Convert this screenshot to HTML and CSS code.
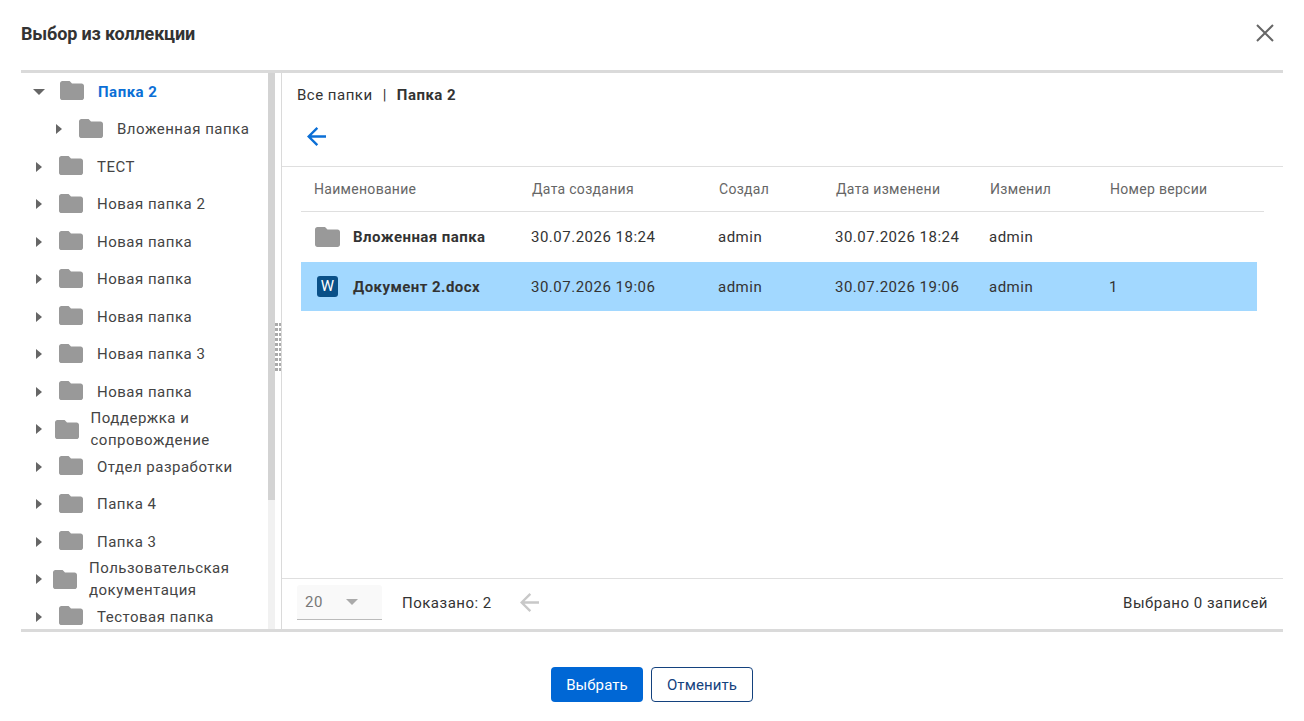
FILE: index.html
```html
<!DOCTYPE html>
<html lang="ru">

<head>
    <meta charset="UTF-8">
    <title>Выбор из коллекции</title>
    <link rel="stylesheet" href="styles.css">
</head>

<body>
    <svg class="sprite" width="0" height="0">
        <symbol id="folder" viewBox="2 4 20 16">
            <path d="M10 4H4c-1.1 0-2 .9-2 2v12c0 1.1.9 2 2 2h16c1.1 0 2-.9 2-2V8c0-1.1-.9-2-2-2h-8l-2-2z" />
        </symbol>
        <symbol id="arrow-left" viewBox="4 4 16 16">
            <path d="M20 11H7.83l5.59-5.59L12 4l-8 8 8 8 1.41-1.41L7.83 13H20v-2z" />
        </symbol>
    </svg>

    <header class="header">
        <h1 class="title">Выбор из коллекции</h1>
        <svg class="close" viewBox="0 0 18 18">
            <path d="M1 1l16 16M17 1L1 17" />
        </svg>
    </header>

    <main class="panel">
        <!-- дерево папок -->
        <nav class="tree">
            <div class="tree-row tree-row--active">
                <span class="caret caret--open"></span>
                <svg class="folder"><use href="#folder" /></svg>
                <span class="tree-label">Папка 2</span>
            </div>
            <div class="tree-row tree-row--nested">
                <span class="caret"></span>
                <svg class="folder"><use href="#folder" /></svg>
                <span class="tree-label">Вложенная папка</span>
            </div>
            <div class="tree-row"><span class="caret"></span><svg class="folder"><use href="#folder" /></svg><span class="tree-label">ТЕСТ</span></div>
            <div class="tree-row"><span class="caret"></span><svg class="folder"><use href="#folder" /></svg><span class="tree-label">Новая папка 2</span></div>
            <div class="tree-row"><span class="caret"></span><svg class="folder"><use href="#folder" /></svg><span class="tree-label">Новая папка</span></div>
            <div class="tree-row"><span class="caret"></span><svg class="folder"><use href="#folder" /></svg><span class="tree-label">Новая папка</span></div>
            <div class="tree-row"><span class="caret"></span><svg class="folder"><use href="#folder" /></svg><span class="tree-label">Новая папка</span></div>
            <div class="tree-row"><span class="caret"></span><svg class="folder"><use href="#folder" /></svg><span class="tree-label">Новая папка 3</span></div>
            <div class="tree-row"><span class="caret"></span><svg class="folder"><use href="#folder" /></svg><span class="tree-label">Новая папка</span></div>
            <div class="tree-row tree-row--wrap"><span class="caret"></span><svg class="folder"><use href="#folder" /></svg><span class="tree-label">Поддержка и сопровождение</span></div>
            <div class="tree-row"><span class="caret"></span><svg class="folder"><use href="#folder" /></svg><span class="tree-label">Отдел разработки</span></div>
            <div class="tree-row"><span class="caret"></span><svg class="folder"><use href="#folder" /></svg><span class="tree-label">Папка 4</span></div>
            <div class="tree-row"><span class="caret"></span><svg class="folder"><use href="#folder" /></svg><span class="tree-label">Папка 3</span></div>
            <div class="tree-row tree-row--wrap2"><span class="caret"></span><svg class="folder"><use href="#folder" /></svg><span class="tree-label">Пользовательская документация</span></div>
            <div class="tree-row"><span class="caret"></span><svg class="folder"><use href="#folder" /></svg><span class="tree-label">Тестовая папка</span></div>
        </nav>
        <div class="scrollbar"><div class="scrollbar-thumb"></div></div>
        <div class="splitter"><div class="splitter-grip"></div></div>

        <!-- содержимое папки -->
        <section class="content">
            <div class="crumbs">
                <span>Все папки</span>
                <span class="crumbs-sep">|</span>
                <b class="crumbs-current">Папка 2</b>
            </div>
            <div class="back">
                <svg class="back-icon"><use href="#arrow-left" /></svg>
            </div>

            <div class="table">
                <div class="table-head">
                    <span>Наименование</span>
                    <span>Дата создания</span>
                    <span>Создал</span>
                    <span>Дата изменени</span>
                    <span>Изменил</span>
                    <span>Номер версии</span>
                </div>
                <div class="table-row">
                    <span class="name"><svg class="folder folder--table"><use href="#folder" /></svg><b>Вложенная папка</b></span>
                    <span>30.07.2026 18:24</span>
                    <span>admin</span>
                    <span>30.07.2026 18:24</span>
                    <span>admin</span>
                    <span></span>
                </div>
                <div class="table-row table-row--selected">
                    <span class="name"><span class="word-icon">W</span><b>Документ 2.docx</b></span>
                    <span>30.07.2026 19:06</span>
                    <span>admin</span>
                    <span>30.07.2026 19:06</span>
                    <span>admin</span>
                    <span>1</span>
                </div>
            </div>

            <footer class="pager">
                <div class="page-size">
                    <span>20</span>
                    <span class="page-size-caret"></span>
                </div>
                <span class="pager-count">Показано: 2</span>
                <svg class="pager-prev"><use href="#arrow-left" /></svg>
                <span class="pager-selected">Выбрано 0 записей</span>
            </footer>
        </section>
    </main>

    <div class="actions">
        <button type="button" class="btn btn--primary">Выбрать</button>
        <button type="button" class="btn btn--outline">Отменить</button>
    </div>
</body>

</html>
```

FILE: styles.css
```css
* {
    margin: 0;
    padding: 0;
    box-sizing: border-box;
}

body {
    font-family: Roboto, "Liberation Sans", sans-serif;
    font-size: 15px;
    color: #333;
    background-color: #fff;
    width: 1304px;
    height: 721px;
    overflow: hidden;
    letter-spacing: 0.5px;
}

.sprite {
    display: block;
    height: 0;
}

.header {
    height: 70px;
    padding: 0 30px 4px 21px;
    display: flex;
    align-items: center;
    justify-content: space-between;
}

.title {
    font-size: 18px;
    font-weight: 700;
    color: #333;
    letter-spacing: -0.15px;
}

.close {
    width: 18px;
    height: 18px;
    fill: none;
    stroke: #666;
    stroke-width: 2;
}

.panel {
    margin: 0 21px;
    height: 562px;
    border-top: 3px solid #dadada;
    border-bottom: 3px solid #dadada;
    display: flex;
}

/* дерево */
.tree {
    width: 247px;
    flex-shrink: 0;
    overflow: hidden;
}

.tree-row {
    height: 37.5px;
    padding-left: 13px;
    display: flex;
    align-items: center;
    color: #444;
}

.tree-row--nested {
    padding-left: 33px;
}

.tree-row--active .tree-label {
    color: #0b6fd6;
    font-weight: 700;
}

.caret {
    width: 0;
    height: 0;
    margin: 0 17px 0 2px;
    border-top: 5px solid transparent;
    border-bottom: 5px solid transparent;
    border-left: 6px solid #666;
    flex-shrink: 0;
}

.caret--open {
    margin: 0 15px 0 -1px;
    border-left: 6.5px solid transparent;
    border-right: 6.5px solid transparent;
    border-top: 6px solid #666;
    border-bottom: 0;
}

.folder {
    width: 24px;
    height: 19.2px;
    fill: #999;
    flex-shrink: 0;
    margin: 0 14px 2px 0;
}

.tree-label {
    line-height: 22px;
}

.tree-row--wrap .folder {
    margin: 0 11.5px 0 -4px;
}

.tree-row--wrap2 .folder {
    margin: 0 12px 0 -6px;
}

/* полоса прокрутки и разделитель */
.scrollbar {
    width: 7px;
    flex-shrink: 0;
    background-color: #f1f1f1;
}

.scrollbar-thumb {
    height: 427px;
    background-color: #d3d3d3;
}

.splitter {
    width: 7px;
    flex-shrink: 0;
    display: flex;
    align-items: center;
    border-right: 1px solid #dadada;
    padding-bottom: 6px;
}

.splitter-grip {
    width: 6px;
    height: 50px;
    background-image: repeating-linear-gradient(to bottom, #aaa 0, #aaa 3px, transparent 3px, transparent 5px);
    -webkit-mask-image: linear-gradient(to right, #000 0, #000 3px, transparent 3px, transparent 4px, #000 4px);
    mask-image: linear-gradient(to right, #000 0, #000 3px, transparent 3px, transparent 4px, #000 4px);
}

/* правая часть */
.content {
    flex: 1;
    min-width: 0;
    display: flex;
    flex-direction: column;
}

.crumbs {
    height: 44px;
    padding: 0 0 0 15px;
    display: flex;
    align-items: center;
}

.crumbs-sep {
    margin: 0 10px;
}

.crumbs-current {
    font-weight: 700;
}

.back {
    height: 50px;
    padding: 10px 0 0 25px;
    border-bottom: 1px solid #dfdfdf;
}

.back-icon {
    display: block;
    width: 19px;
    height: 19px;
    fill: #0b6fd6;
}

.table {
    flex: 1;
    padding: 0 19px 0 19px;
}

.table-head,
.table-row {
    display: grid;
    grid-template-columns: 230px 187px 117px 154px 120px 1fr;
    align-items: center;
}

.table-head {
    height: 45px;
    padding-left: 13px;
    grid-template-columns: 218px 187px 117px 154px 120px 1fr;
    font-size: 14px;
    letter-spacing: 0.3px;
    color: #666;
    border-bottom: 1px solid #dfdfdf;
}

.table-row {
    height: 50px;
    width: 956px;
}

.table-row--selected {
    height: 49px;
    background-color: #a2d8ff;
}

.name {
    display: flex;
    align-items: center;
}

.name b {
    font-weight: 700;
    letter-spacing: 0.45px;
}

.folder--table {
    margin: 0 13px 0 14px;
    width: 25px;
    height: 20px;
}

.word-icon {
    width: 21px;
    height: 21px;
    margin: 0 15px 0 16px;
    border-radius: 3px;
    background-color: #0a5088;
    color: #fff;
    font-size: 15px;
    text-align: center;
    line-height: 21px;
    letter-spacing: 0;
}

.pager {
    height: 51px;
    padding: 0 15px 3px;
    border-top: 1px solid #dfdfdf;
    display: flex;
    align-items: center;
}

.page-size {
    width: 85px;
    height: 35px;
    padding: 0 24px 0 8px;
    display: flex;
    align-items: center;
    justify-content: space-between;
    background-color: #f9f9f9;
    border-bottom: 1px solid #bbb;
    border-radius: 3px 3px 0 0;
    color: #777;
}

.page-size-caret {
    border-left: 6.5px solid transparent;
    border-right: 6.5px solid transparent;
    border-top: 6px solid #aaa;
}

.pager-count {
    margin-left: 20px;
    color: #333;
}

.pager-prev {
    width: 19px;
    height: 19px;
    margin-left: 28px;
    fill: #c8c8c8;
}

.pager-selected {
    margin-left: auto;
}

.actions {
    height: 89px;
    padding-top: 35px;
    display: flex;
    justify-content: center;
    gap: 8px;
}

.btn {
    height: 35px;
    border-radius: 4px;
    font-family: inherit;
    font-size: 15px;
    letter-spacing: 0.1px;
    cursor: pointer;
}

.btn--primary {
    width: 92px;
    background-color: #0067d5;
    border: none;
    color: #fff;
}

.btn--outline {
    width: 102px;
    background-color: #fff;
    border: 1px solid #14427e;
    color: #14427e;
}
```
